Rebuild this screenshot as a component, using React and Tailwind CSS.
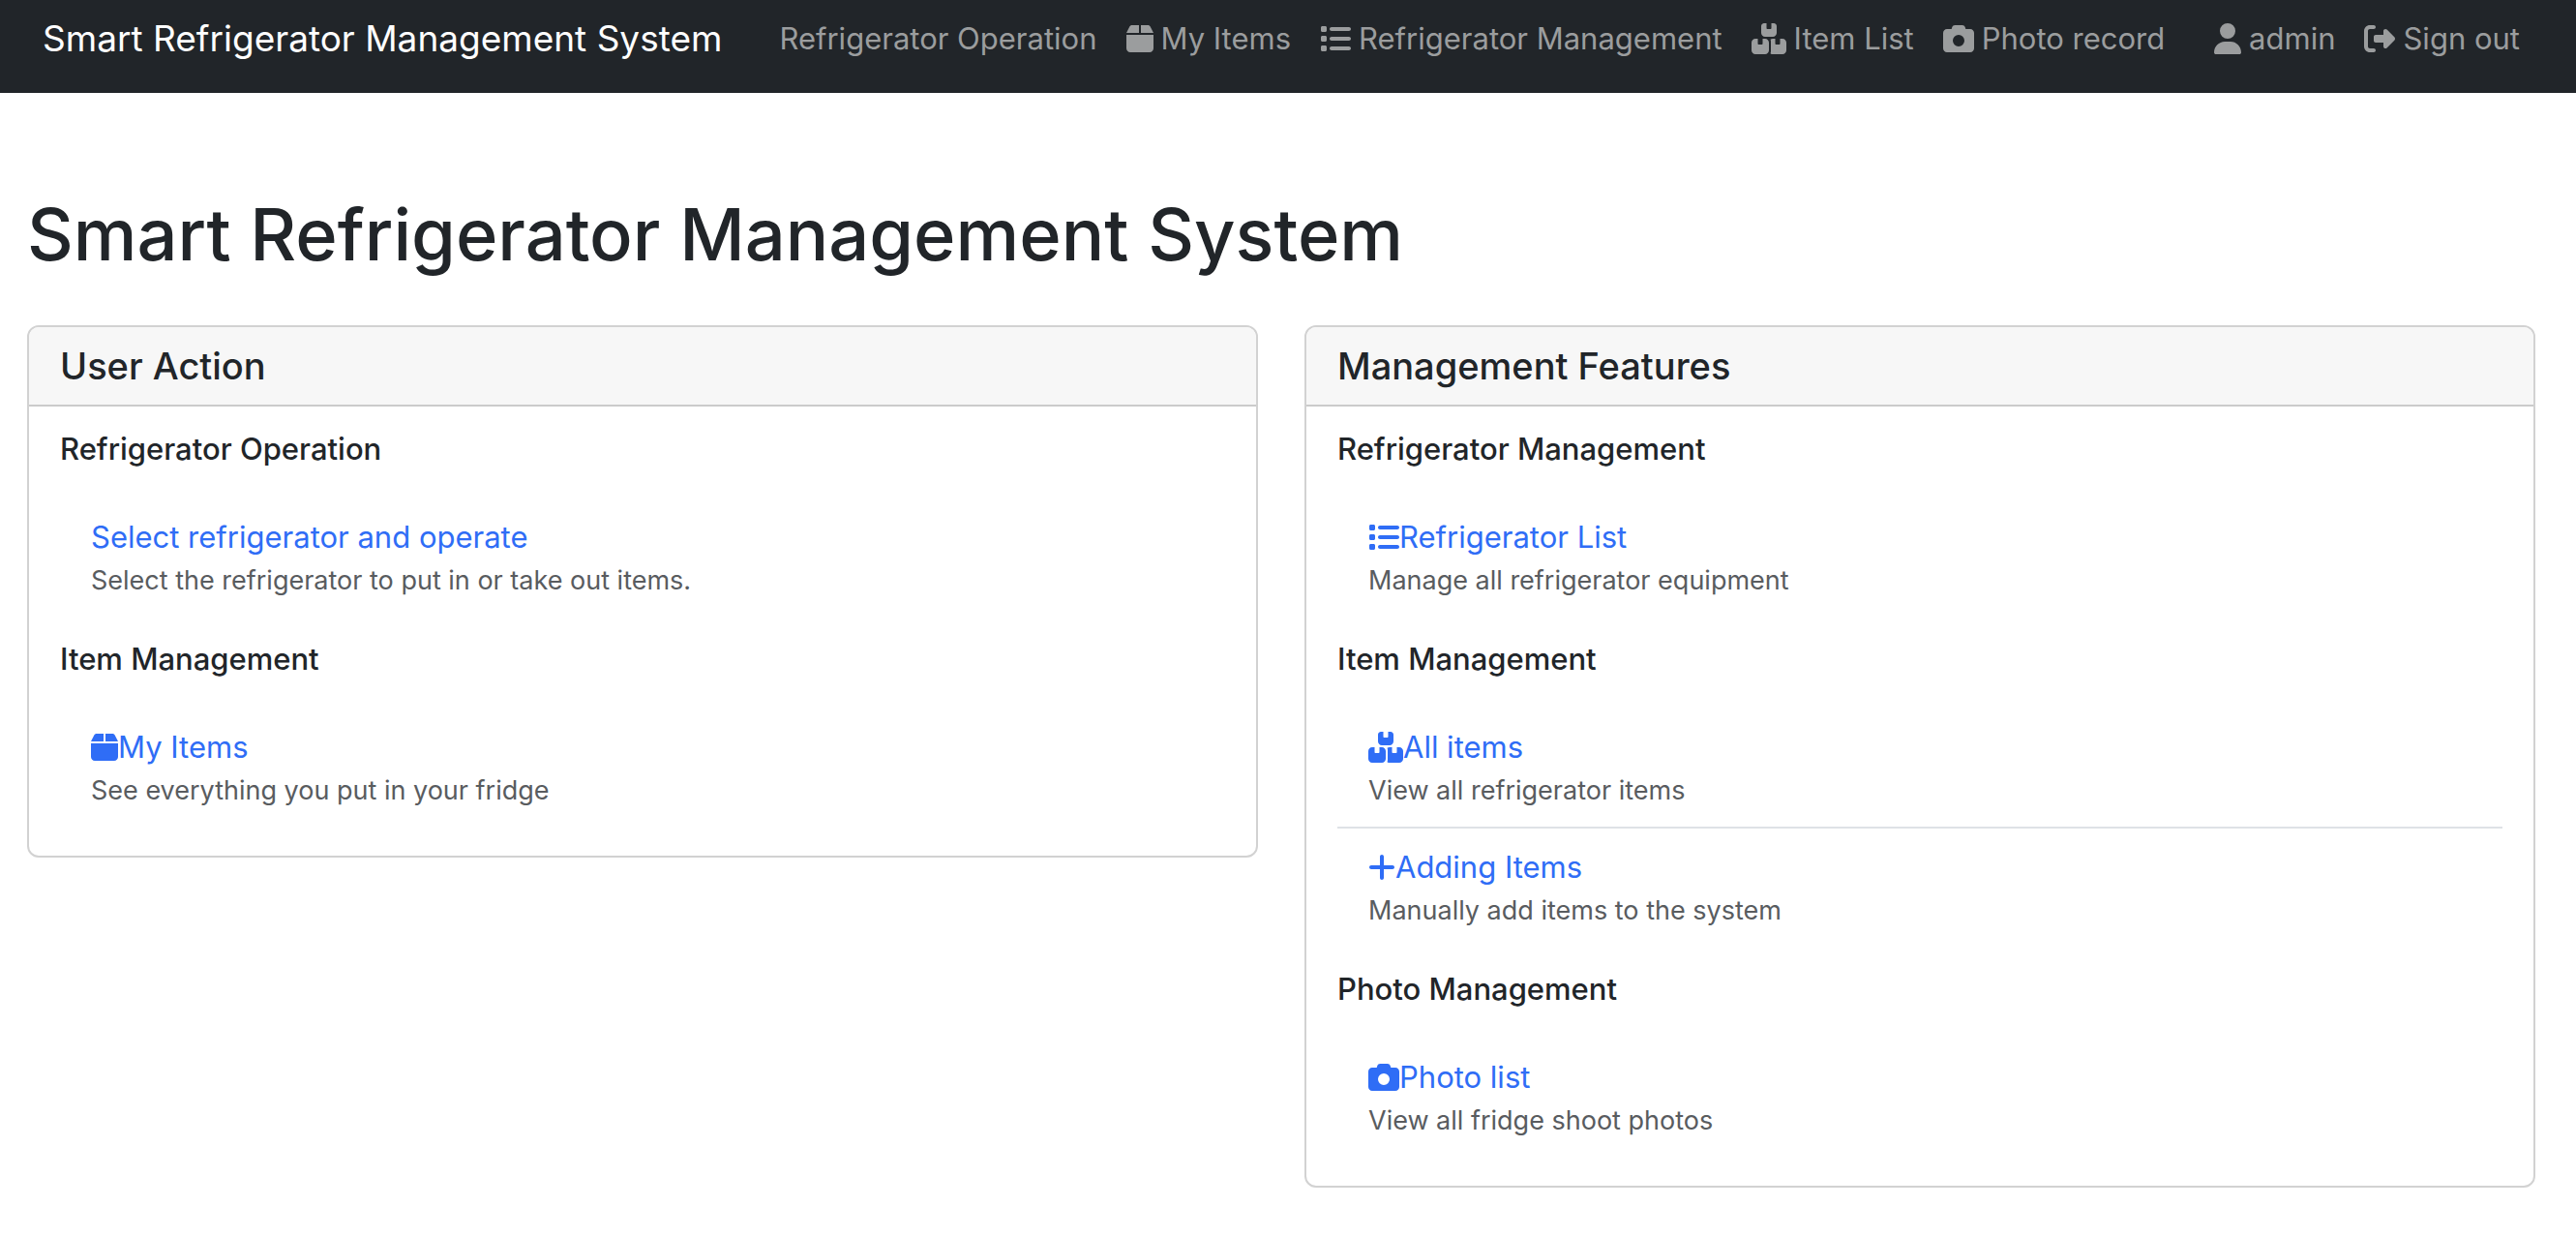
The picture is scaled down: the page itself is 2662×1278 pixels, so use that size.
import React from "react";
import {
  FaBox,
  FaBoxesStacked,
  FaCamera,
  FaList,
  FaPlus,
  FaRightFromBracket,
  FaUser,
} from "react-icons/fa6";

const BoxIcon = () => <FaBox className="h-8 w-7" aria-hidden="true" />;
const BoxesIcon = () => <FaBoxesStacked className="h-8 w-9" aria-hidden="true" />;
const CameraIcon = () => <FaCamera className="h-8 w-8" aria-hidden="true" />;
const ListIcon = () => <FaList className="h-8 w-8" aria-hidden="true" />;
const PlusIcon = () => <FaPlus className="h-8 w-7" aria-hidden="true" />;
const SignOutIcon = () => <FaRightFromBracket className="h-8 w-8" aria-hidden="true" />;
const UserIcon = () => <FaUser className="h-8 w-7" aria-hidden="true" />;

const mainLinks = [
  { label: "Refrigerator Operation" },
  { label: "My Items", icon: BoxIcon },
  { label: "Refrigerator Management", icon: ListIcon },
  { label: "Item List", icon: BoxesIcon },
  { label: "Photo record", icon: CameraIcon },
];

const accountLinks = [
  { label: "admin", icon: UserIcon },
  { label: "Sign out", icon: SignOutIcon },
];

const userSections = [
  {
    title: "Refrigerator Operation",
    items: [
      {
        label: "Select refrigerator and operate",
        text: "Select the refrigerator to put in or take out items.",
      },
    ],
  },
  {
    title: "Item Management",
    items: [
      { label: "My Items", icon: BoxIcon, text: "See everything you put in your fridge" },
    ],
  },
];

const managementSections = [
  {
    title: "Refrigerator Management",
    items: [
      { label: "Refrigerator List", icon: ListIcon, text: "Manage all refrigerator equipment" },
    ],
  },
  {
    title: "Item Management",
    items: [
      { label: "All items", icon: BoxesIcon, text: "View all refrigerator items" },
      { label: "Adding Items", icon: PlusIcon, text: "Manually add items to the system" },
    ],
  },
  {
    title: "Photo Management",
    items: [
      { label: "Photo list", icon: CameraIcon, text: "View all fridge shoot photos" },
    ],
  },
];

function NavList({ links }) {
  return (
    <ul className="flex">
      {links.map(({ label, icon: Icon }) => (
        <li key={label}>
          <a
            href="#"
            className="flex items-center gap-2 px-[15px] py-4 text-[31px] leading-[48px] whitespace-nowrap text-[#9b9d9e]"
          >
            {Icon && <Icon />}
            {label}
          </a>
        </li>
      ))}
    </ul>
  );
}

function Card({ title, sections }) {
  return (
    <section className="overflow-hidden rounded-xl border-2 border-[#d2d2d2] bg-white">
      <h2 className="border-b-2 border-[#cbcbcb] bg-[#f7f7f7] px-8 py-4 text-[38px] leading-[48px] font-medium">
        {title}
      </h2>
      <div className="flex flex-col gap-6 px-8 pt-6 pb-[30px]">
        {sections.map((section) => (
          <div key={section.title}>
            <h3 className="mb-8 text-[31px] leading-[39px] font-medium">{section.title}</h3>
            <ul className="divide-y-2 divide-[#dee2e6]">
              {section.items.map(({ label, icon: Icon, text }) => (
                <li key={label} className="px-8 py-4">
                  <a
                    href="#"
                    className="flex w-fit items-center text-[31px] leading-[48px] text-[#2f6df6]"
                  >
                    {Icon && <Icon />}
                    {label}
                  </a>
                  <p className="text-[27px] leading-[42px] text-[#595c5f]">{text}</p>
                </li>
              ))}
            </ul>
          </div>
        ))}
      </div>
    </section>
  );
}

export default function App() {
  return (
    <div className="min-h-screen bg-white font-['Inter',sans-serif] text-[#212529]">
      <nav className="flex items-start bg-[#212529] pr-[43px] pb-4 pl-11">
        <a href="#" className="mr-11 py-[10px] text-[37px] leading-[60px] whitespace-nowrap text-white">
          Smart Refrigerator Management System
        </a>
        <div className="flex grow justify-between">
          <NavList links={mainLinks} />
          <NavList links={accountLinks} />
        </div>
      </nav>
      <main className="pt-24 pr-[42px] pb-12 pl-7">
        <h1 className="mb-11 text-[74px] leading-[100px] font-medium">
          Smart Refrigerator Management System
        </h1>
        <div className="grid grid-cols-2 items-start gap-12">
          <Card title="User Action" sections={userSections} />
          <Card title="Management Features" sections={managementSections} />
        </div>
      </main>
    </div>
  );
}
